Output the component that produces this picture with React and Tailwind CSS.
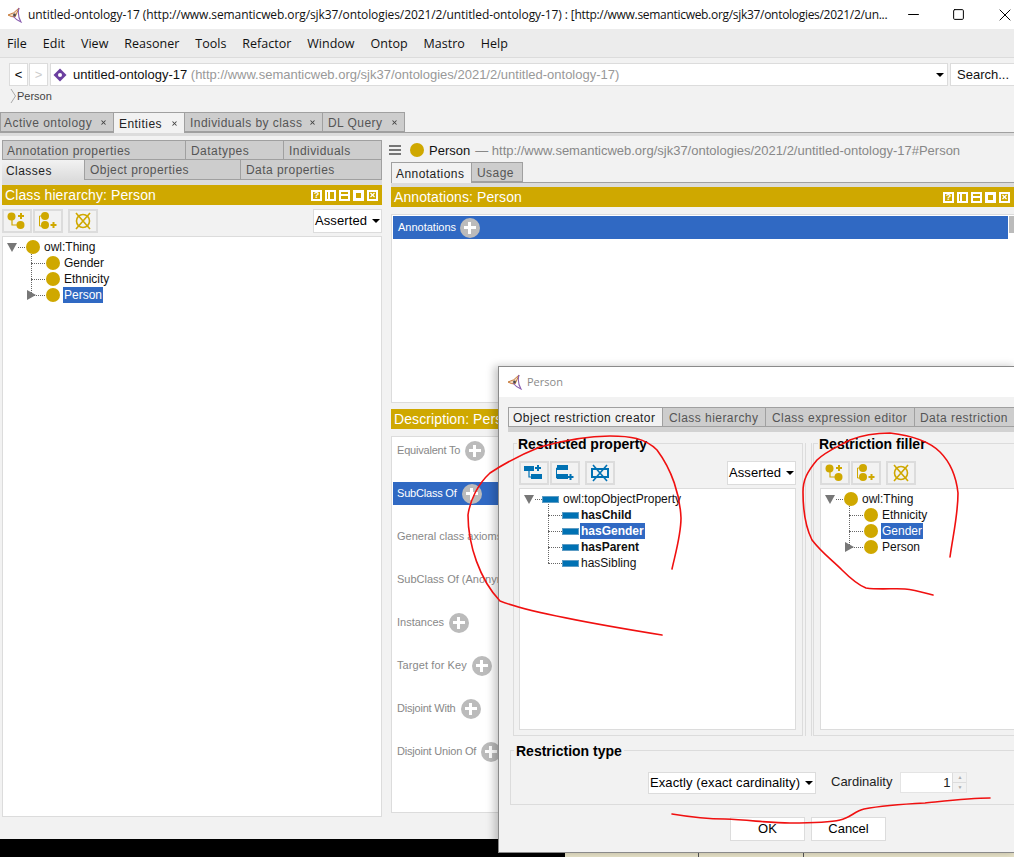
import React from 'react';
import { X, Minus, Square } from 'lucide-react';

const menuItems = ['File', 'Edit', 'View', 'Reasoner', 'Tools', 'Refactor', 'Window', 'Ontop', 'Mastro', 'Help'];

const descriptionRows = [
  { label: 'Equivalent To', track: 'tracking-[-0.2px]' },
  { label: 'SubClass Of', selected: true, track: 'tracking-[-0.2px]' },
  { label: 'General class axioms', noAdd: true },
  { label: 'SubClass Of (Anonymous Ancestor)', noAdd: true },
  { label: 'Instances' },
  { label: 'Target for Key', track: 'tracking-[0.1px]' },
  { label: 'Disjoint With', track: 'tracking-[-0.2px]' },
  { label: 'Disjoint Union Of', track: 'tracking-[-0.2px]' },
];

const Logo = () => (
  <svg width="16" height="16" viewBox="0 0 16 16" fill="none" className="shrink-0">
    <path d="M1 8 Q7 7 12 1 Q10 6 8 10 Q4 10 1 8 Z" stroke="#c77a3a" strokeWidth="1" fill="#f3d9c0" />
    <path d="M12 1 Q10 8 14 15 Q9 13 6 9" stroke="#8a5fb0" strokeWidth="1.1" />
    <circle cx="7.5" cy="8" r="1.4" fill="#4a4a4a" />
  </svg>
);

const ClassDot = () => <span className="inline-block h-[14px] w-[14px] shrink-0 rounded-full bg-[#cfa800]" />;

const PropBar = () => <span className="-ml-[1px] inline-block h-[7px] w-[17px] shrink-0 border border-[#5d9cc4] bg-[#0071b3]" />;

const Tab = ({ label, active, close, next, pad, className = '' }) => (
  <div
    className={`flex h-[20px] shrink-0 items-center justify-between border border-[#a0a0a0] pr-[6px] pt-[1px] text-[12px] tracking-[0.45px] ${
      pad || (next ? 'pl-[5px]' : 'pl-[4px]')
    } ${next ? 'border-l-0' : ''} ${active ? 'bg-[#f2f2f2] text-[#222]' : 'bg-[#cdcdcd] text-[#555]'} ${className}`}
  >
    <span className="whitespace-nowrap">{label}</span>
    {close && <X size={7} strokeWidth={3.5} className="text-[#444]" />}
  </div>
);

const BannerIcons = () => (
  <div className="flex items-center gap-[3px]">
    <span className="flex h-[11px] w-[11px] items-center justify-center border-2 border-white text-[9px] font-bold leading-none text-white">?</span>
    <span className="flex h-[11px] w-[11px] border-2 border-white"><span className="ml-[1px] h-full w-[2px] bg-white" /></span>
    <span className="flex h-[11px] w-[11px] items-center border-2 border-white"><span className="h-[2px] w-full bg-white" /></span>
    <span className="h-[11px] w-[11px] border-[3px] border-white" />
    <span className="flex h-[11px] w-[11px] items-center justify-center border-2 border-white">
      <X size={8} strokeWidth={4} className="text-white" />
    </span>
  </div>
);

const Banner = ({ title, className = '' }) => (
  <div className={`flex h-[20px] items-center justify-between bg-[#cfa800] pl-[3px] pr-[4px] text-[14px] tracking-[0.1px] text-white ${className}`}>
    <span className="whitespace-nowrap">{title}</span>
    <BannerIcons />
  </div>
);

const ToolButton = ({ children, className = '' }) => (
  <div className={`flex h-[24px] w-[30px] items-center justify-center border-2 border-[#dcdcdc] bg-[#f2f2f2] ${className}`}>
    {children}
  </div>
);

const AddSubIcon = ({ color = '#cfa800', bar }) => (
  <svg width="20" height="18" viewBox="0 0 20 18" fill="none">
    <path d="M5 6 V13 H11" stroke={color} strokeWidth="1.2" />
    {bar ? (
      <>
        <rect x="0" y="2" width="10" height="5" fill={color} />
        <rect x="7" y="10" width="11" height="5" fill={color} />
      </>
    ) : (
      <>
        <circle cx="4.5" cy="4.5" r="4" fill={color} />
        <circle cx="13.5" cy="13" r="4" fill={color} />
      </>
    )}
    <path d="M14 1 V7 M11 4 H17" stroke={color} strokeWidth="2" />
  </svg>
);

const AddSiblingIcon = ({ color = '#cfa800', bar }) => (
  <svg width="20" height="18" viewBox="0 0 20 18" fill="none">
    <path d="M5 4 H1.5 V14 H5" stroke={color} strokeWidth="1" />
    {bar ? (
      <>
        <rect x="2" y="1" width="11" height="5" fill={color} />
        <rect x="2" y="10" width="11" height="5" fill={color} />
      </>
    ) : (
      <>
        <circle cx="7" cy="4" r="4" fill={color} />
        <circle cx="7" cy="13" r="4" fill={color} />
      </>
    )}
    <path d="M15.5 10 V16 M12.5 13 H18.5" stroke={color} strokeWidth="2" />
  </svg>
);

const DeleteIcon = ({ color = '#cfa800', bar }) => (
  <svg width="20" height="20" viewBox="0 0 20 20" fill="none">
    {bar ? (
      <rect x="2" y="6" width="16" height="8" stroke={color} strokeWidth="2" />
    ) : (
      <circle cx="10" cy="10" r="6.5" stroke={color} strokeWidth="1.6" />
    )}
    <path d="M3 2 L17 18 M17 2 L3 18" stroke={color} strokeWidth="1.6" />
  </svg>
);

const Toolbar = ({ bar, color }) => (
  <div className="flex items-center">
    <ToolButton><AddSubIcon bar={bar} color={color} /></ToolButton>
    <ToolButton className="ml-[1px]"><AddSiblingIcon bar={bar} color={color} /></ToolButton>
    <ToolButton className="ml-[5px]"><DeleteIcon bar={bar} color={color} /></ToolButton>
  </div>
);

const Caret = () => <span className="block h-0 w-0 shrink-0 border-x-[4px] border-t-[4px] border-x-transparent border-t-black" />;

const AssertedSelect = () => (
  <div className="flex h-[24px] w-[69px] items-center justify-between border border-[#dcdcdc] bg-white pl-[1px] pr-[1px] text-[13px] tracking-[0.1px] text-black">
    <span>Asserted</span>
    <Caret />
  </div>
);

const Expander = ({ open }) =>
  open ? (
    <span className="block h-0 w-0 shrink-0 border-x-[5px] border-t-[9px] border-x-transparent border-t-[#777]" />
  ) : (
    <span className="block h-0 w-0 shrink-0 border-y-[5px] border-l-[9px] border-y-transparent border-l-[#777]" />
  );

// one row of a class or property tree, 16px high
const TreeNode = ({ label, icon, selected, bold, expander }) => (
  <div className="relative flex h-[16px] items-center pl-[21px]">
    <span className="absolute left-[6px] top-[-8px] h-[16px] w-0 border-l border-dotted border-[#666]" />
    <span className="absolute left-[6px] top-[8px] w-[14px] border-t border-dotted border-[#666]" />
    {expander && (
      <span className="absolute left-[2px] top-[3px]">
        <Expander />
      </span>
    )}
    <span className="relative z-10 flex w-[17px] items-center">{icon}</span>
    <span
      className={`whitespace-nowrap px-[1px] text-[12px] leading-[16px] ${bold ? 'font-bold' : ''} ${
        selected ? 'bg-[#3069c3] text-white' : 'text-[#111]'
      }`}
    >
      {label}
    </span>
  </div>
);

const TreeRoot = ({ label, icon }) => (
  <div className="flex h-[16px] items-center">
    <Expander open />
    <span className="mx-[1px] w-[7px] border-t border-dotted border-[#666]" />
    <span className="relative z-10 mr-[4px] flex items-center">{icon}</span>
    <span className="whitespace-nowrap text-[12px] leading-[16px] text-[#111]">{label}</span>
  </div>
);

const AddCircle = () => (
  <span className="relative inline-block h-[20px] w-[20px] shrink-0 rounded-full bg-[#bbbbbb]">
    <span className="absolute left-[4px] top-[8px] h-[3px] w-[12px] bg-white" />
    <span className="absolute left-[8px] top-[4px] h-[12px] w-[3px] bg-white" />
  </span>
);

const RedStrokes = () => (
  <svg width="1014" height="857" viewBox="0 0 1014 857" fill="none" className="pointer-events-none absolute left-0 top-0 z-30">
    <g stroke="#f01010" strokeWidth="1.6" strokeLinecap="round" strokeLinejoin="round">
      <path d="M672 569 C675 555 681 535 681 518 C680 495 672 470 657 450 C645 438 630 436 610 436 C590 436 565 440 540 447 C520 455 505 463 490 473 C478 484 470 500 468 515 C468 545 480 580 500 601 C530 613 600 625 662 635" />
      <path d="M950 557 C953 535 958 515 958 493 C956 475 950 462 940 452 C930 442 915 436 890 433 C870 433 860 436 850 440 C835 448 825 452 817 460 C807 472 803 480 803 492 C803 515 806 528 812 540 C822 553 832 560 842 570 C850 578 858 585 866 588 C880 590 895 588 905 589 C915 590 925 593 933 595" />
      <path d="M672 814 C690 817 705 819 725 819 C750 820 770 823 790 823 C810 823 828 823 840 820 C850 818 855 811 864 809 C885 805 905 804 925 803 C945 801 970 798 990 798" />
    </g>
  </svg>
);

const PersonDialog = () => (
  <div className="absolute left-[498px] top-[366px] z-20 flex h-[487px] w-[520px] flex-col border border-[#8a8a8a] bg-[#f2f2f2] shadow-[-4px_0_8px_rgba(0,0,0,0.22)]">
    <div className="flex h-[30px] shrink-0 items-center gap-[4px] bg-white pl-[8px] text-[11px] text-[#8a8a8a] [font-family:'Open_Sans',sans-serif]">
      <Logo />
      <span>Person</span>
    </div>

    <div className="ml-[9px] mt-[10px] flex h-[25px] shrink-0 items-start bg-[#d2d2d2]">
      <Tab label="Object restriction creator" active className="w-[155px]" />
      <Tab label="Class hierarchy" next pad="pl-[6px]" className="w-[103px]" />
      <Tab label="Class expression editor" next pad="pl-[6px]" className="w-[149px]" />
      <Tab label="Data restriction" next className="w-[103px]" />
    </div>

    <div className="mt-[11px] flex h-[293px] shrink-0 pl-[14px]">
      <div className="relative flex h-full w-[290px] shrink-0 flex-col border border-[#dcdcdc] pb-[5px] pl-[5px] pr-[6px]">
        <span className="absolute left-[3px] top-[-9px] bg-[#f2f2f2] px-[1px] text-[14px] font-bold leading-[18px] text-black">Restricted property</span>
        <div className="mt-[17px] flex items-center justify-between">
          <Toolbar bar color="#0071b3" />
          <AssertedSelect />
        </div>
        <div className="mt-[3px] flex-1 border border-[#dcdcdc] bg-white pl-[4px] pt-[2px]">
          <TreeRoot label="owl:topObjectProperty" icon={<PropBar />} />
          <div className="ml-[18px]">
            <TreeNode label="hasChild" bold icon={<PropBar />} />
            <TreeNode label="hasGender" bold selected icon={<PropBar />} />
            <TreeNode label="hasParent" bold icon={<PropBar />} />
            <TreeNode label="hasSibling" icon={<PropBar />} />
          </div>
        </div>
      </div>
      <div className="ml-[2px] h-full w-[7px] shrink-0 border-x border-[#dcdcdc]" />
      <div className="relative ml-[1px] flex h-full w-[210px] shrink-0 flex-col border border-r-0 border-[#dcdcdc] pb-[5px] pl-[6px]">
        <span className="absolute left-[4px] top-[-9px] bg-[#f2f2f2] px-[1px] text-[14px] font-bold leading-[18px] text-black">Restriction filler</span>
        <div className="mt-[17px] flex items-center">
          <Toolbar />
        </div>
        <div className="mt-[3px] flex-1 border border-r-0 border-[#dcdcdc] bg-white pl-[4px] pt-[2px]">
          <TreeRoot label="owl:Thing" icon={<ClassDot />} />
          <div className="ml-[18px]">
            <TreeNode label="Ethnicity" icon={<ClassDot />} />
            <TreeNode label="Gender" selected icon={<ClassDot />} />
            <TreeNode label="Person" expander icon={<ClassDot />} />
          </div>
        </div>
      </div>
    </div>

    <div className="relative ml-[11px] mt-[14px] flex h-[55px] w-[520px] shrink-0 items-start border border-[#dcdcdc] pl-[137px] pt-[21px]">
      <span className="absolute left-[3px] top-[-9px] bg-[#f2f2f2] px-[2px] text-[14px] font-bold leading-[18px] text-black">Restriction type</span>
      <div className="flex h-[22px] w-[168px] items-center justify-between border border-[#dcdcdc] bg-white pb-[1px] pl-[1px] pr-[2px] text-[13px] tracking-[0.1px] text-black">
        <span className="whitespace-nowrap">Exactly (exact cardinality)</span>
        <Caret />
      </div>
      <span className="ml-[15px] text-[13px] leading-[20px] text-[#222]">Cardinality</span>
      <div className="ml-[8px] flex h-[21px] w-[67px] items-center border border-[#e4e4e4] bg-white">
        <span className="flex-1 pr-[2px] text-right text-[13px] text-[#222]">1</span>
        <div className="flex h-full w-[14px] flex-col border-l border-[#dcdcdc] bg-[#f2f2f2]">
          <span className="flex flex-1 items-center justify-center border-b border-[#dcdcdc] text-[5px] leading-none text-[#aaa]">▲</span>
          <span className="flex flex-1 items-center justify-center text-[5px] leading-none text-[#aaa]">▼</span>
        </div>
      </div>
    </div>

    <div className="mt-[12px] flex gap-[6px] pl-[231px]">
      <div className="flex h-[24px] w-[75px] items-center justify-center border border-[#dcdcdc] bg-white text-[13px] text-black">OK</div>
      <div className="flex h-[24px] w-[75px] items-center justify-center border border-[#dcdcdc] bg-white text-[13px] text-black">Cancel</div>
    </div>
  </div>
);

const App = () => {
  return (
    <div className="relative flex h-[857px] w-[1014px] flex-col overflow-hidden bg-[#f2f2f2] font-['Liberation_Sans',Arial,sans-serif]">
      {/* window title bar */}
      <div className="flex h-[29px] shrink-0 items-center bg-white pl-[7px] [font-family:'Open_Sans',sans-serif]">
        <Logo />
        <span className="ml-[5px] w-[858px] shrink-0 whitespace-nowrap text-[12px] tracking-[-0.1px] text-[#111]">
          untitled-ontology-17 (http://www.semanticweb.org/sjk37/ontologies/2021/2/untitled-ontology-17) : <span className="tracking-[-0.3px]">[http://www.semanticweb.org/sjk37/ontologies/2021/2/un...</span>
        </span>
        <Minus size={17} strokeWidth={1} absoluteStrokeWidth className="ml-[19px] shrink-0 text-black" />
        <Square size={13} strokeWidth={1} absoluteStrokeWidth className="ml-[30px] shrink-0 text-black" />
        <X size={20} strokeWidth={1} absoluteStrokeWidth className="ml-[30px] shrink-0 text-black" />
      </div>

      {/* menu bar */}
      <div className="flex h-[29px] shrink-0 items-center gap-[16px] border-b border-[#dcdcdc] bg-[#ececec] pl-[7px] pt-[2px] text-[12.5px] text-[#111] [font-family:'Open_Sans',sans-serif]">
        {menuItems.map((item) => (
          <span key={item}>{item}</span>
        ))}
      </div>

      {/* address row */}
      <div className="mt-[5px] flex h-[23px] shrink-0 items-center pl-[9px]">
        <div className="flex h-full w-[19px] items-center justify-center border border-[#dcdcdc] bg-white text-[13px] text-black">&lt;</div>
        <div className="ml-[1px] flex h-full w-[19px] items-center justify-center border border-[#dcdcdc] bg-white text-[13px] text-[#ccc]">&gt;</div>
        <div className="ml-[2px] flex h-full w-[898px] items-center border border-[#dcdcdc] bg-white pl-[2px] pr-[3px]">
          <svg width="14" height="14" viewBox="0 0 14 14" className="shrink-0">
            <path d="M7 0.5 L13.5 7 L7 13.5 L0.5 7 Z" fill="#6b3fa0" />
            <circle cx="7" cy="7" r="2" fill="#fff" />
          </svg>
          <span className="ml-[6px] flex-1 whitespace-nowrap text-[13px] text-[#111]">
            untitled-ontology-17 <span className="text-[#999]">(http://www.semanticweb.org/sjk37/ontologies/2021/2/untitled-ontology-17)</span>
          </span>
          <Caret />
        </div>
        <div className="ml-[2px] flex h-full flex-1 items-center border border-r-0 border-[#dcdcdc] bg-white pl-[6px] text-[13px] text-[#111]">
          Search...
        </div>
      </div>

      {/* breadcrumb */}
      <div className="flex h-[19px] shrink-0 items-center pl-[10px] pt-[1px] text-[11px] text-[#444]">
        <svg width="7" height="16" viewBox="0 0 7 16" fill="none">
          <path d="M1 1 L5.5 8 L1 15" stroke="#aaa" />
        </svg>
        <span>Person</span>
      </div>

      {/* workspace tabs */}
      <div className="mt-[7px] flex h-[21px] shrink-0 items-start border-b border-[#a0a0a0]">
        <Tab label="Active ontology" close pad="pl-[3px]" className="w-[114px]" />
        <Tab label="Entities" close active next className="h-[21px] w-[71px] border-b-0" />
        <Tab label="Individuals by class" close next className="w-[138px]" />
        <Tab label="DL Query" close next className="w-[82px]" />
      </div>
      <div className="h-[3px] shrink-0 bg-[#dcdcdc]" />

      {/* main split */}
      <div className="flex min-h-0 flex-1 pt-[4px]">
        <div className="flex w-[382px] shrink-0 flex-col pl-[2px]">
          <div className="flex h-[20px] shrink-0">
            <Tab label="Annotation properties" className="w-[184px]" />
            <Tab label="Datatypes" next className="w-[98px]" />
            <Tab label="Individuals" next className="w-[98px]" />
          </div>
          <div className="flex h-[20px] shrink-0">
            <Tab label="Classes" active className="w-[83px] border-t-0 border-b-0 border-l-0 bg-linear-to-b from-[#f2f2f2] to-[#dcdcdc]" />
            <Tab label="Object properties" next className="w-[156px] border-t-0" />
            <Tab label="Data properties" next className="w-[141px] border-t-0" />
          </div>
          <div className="h-[5px] shrink-0 bg-[#dcdcdc]" />
          <Banner title="Class hierarchy: Person" className="shrink-0" />
          <div className="mt-[4px] flex h-[24px] shrink-0 items-center justify-between">
            <Toolbar />
            <AssertedSelect />
          </div>
          <div className="mt-[3px] h-[581px] border border-[#dcdcdc] bg-white pl-[4px] pt-[2px]">
            <TreeRoot label="owl:Thing" icon={<ClassDot />} />
            <div className="ml-[18px]">
              <TreeNode label="Gender" icon={<ClassDot />} />
              <TreeNode label="Ethnicity" icon={<ClassDot />} />
              <TreeNode label="Person" selected expander icon={<ClassDot />} />
            </div>
          </div>
        </div>

        <div className="flex min-w-0 flex-1 flex-col pl-[9px]">
          <div className="relative flex h-[20px] shrink-0 items-center">
            <span className="absolute left-[-2px] top-[5px] h-[10px] w-[12px] border-y-2 border-[#777] after:absolute after:left-0 after:top-[2px] after:h-[2px] after:w-full after:bg-[#777]" />
            <span className="ml-[19px] flex"><ClassDot /></span>
            <span className="ml-[5px] whitespace-nowrap pt-[1px] text-[13px] text-[#111]">Person</span>
            <span className="ml-[5px] whitespace-nowrap pt-[1px] text-[13px] text-[#888]">— http://www.semanticweb.org/sjk37/ontologies/2021/2/untitled-ontology-17#Person</span>
          </div>
          <div className="mt-[2px] flex h-[21px] shrink-0 items-start border-b border-[#a0a0a0]">
            <Tab label="Annotations" active className="h-[21px] w-[81px] border-b-0" />
            <Tab label="Usage" next className="w-[51px]" />
          </div>
          <div className="h-[4px] shrink-0 bg-[#dcdcdc]" />
          <Banner title="Annotations: Person" className="shrink-0" />
          <div className="mt-[7px] flex h-[189px] shrink-0 items-start border-y border-l border-[#dcdcdc] bg-white pl-[1px] pt-[1px]">
            <div className="flex h-[23px] w-[615px] items-center gap-[4px] bg-[#3069c3] pl-[5px] text-[11px] text-white">
              Annotations
              <AddCircle />
            </div>
            <div className="ml-[1px] h-[17px] flex-1 bg-[#bbbbbb]" />
          </div>
          <Banner title="Description: Person" className="mt-[6px] shrink-0" />
          <div className="mt-[7px] h-[377px] shrink-0 border-y border-l border-[#dcdcdc] bg-white pl-[1px]">
            <div className="flex flex-col pt-[2px]">
              {descriptionRows.map((row) => (
                <div
                  key={row.label}
                  className={`mb-[20px] flex h-[23px] items-center gap-[5px] pl-[4px] text-[11px] ${
                    row.selected ? 'bg-[#3069c3] text-white' : 'text-[#888]'
                  }`}
                >
                  <span className={`whitespace-nowrap ${row.track || ''}`}>{row.label}</span>
                  {!row.noAdd && <AddCircle />}
                </div>
              ))}
            </div>
          </div>
        </div>
      </div>

      {/* desktop showing under the window */}
      <div className="flex h-[18px] shrink-0 bg-black">
        <div className="ml-[565px] mt-[13px] flex flex-1 bg-[#e9e4c9]">
          <span className="ml-[133px] h-full w-[1px] bg-[#555]" />
          <span className="ml-[104px] h-full w-[1px] bg-[#555]" />
        </div>
      </div>

      <PersonDialog />
      <RedStrokes />
    </div>
  );
};

export default App;
